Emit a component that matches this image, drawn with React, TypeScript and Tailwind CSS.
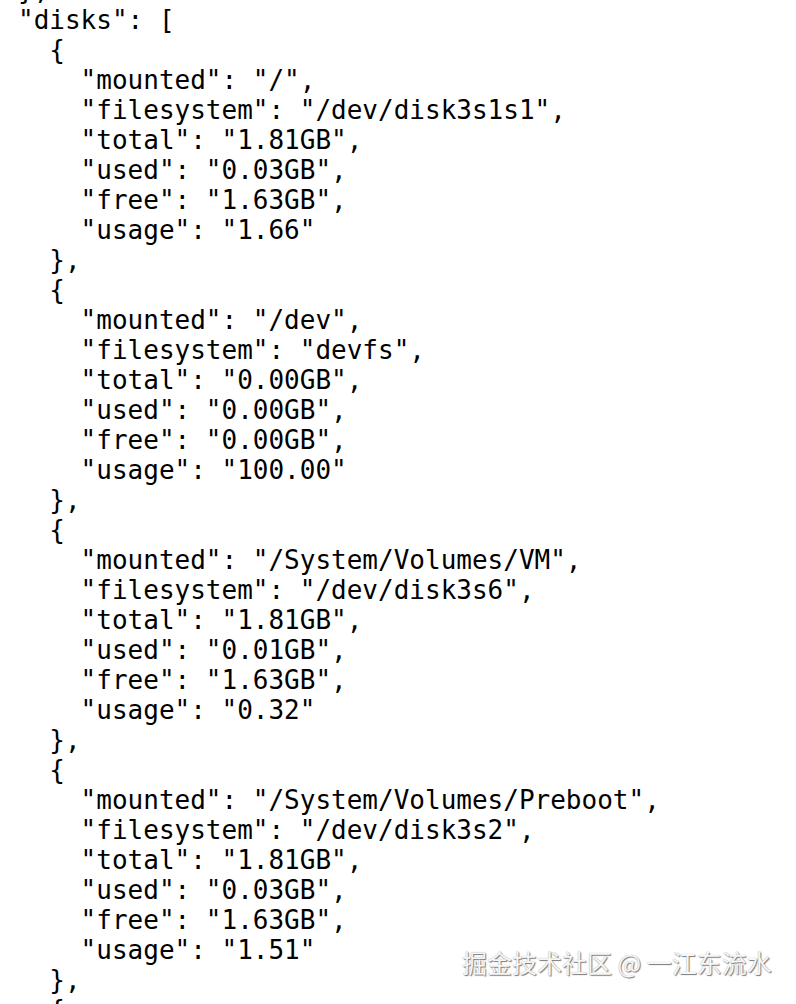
import React from "react";

const disks = [
  { mounted: "/", filesystem: "/dev/disk3s1s1", total: "1.81GB", used: "0.03GB", free: "1.63GB", usage: "1.66" },
  { mounted: "/dev", filesystem: "devfs", total: "0.00GB", used: "0.00GB", free: "0.00GB", usage: "100.00" },
  { mounted: "/System/Volumes/VM", filesystem: "/dev/disk3s6", total: "1.81GB", used: "0.01GB", free: "1.63GB", usage: "0.32" },
  { mounted: "/System/Volumes/Preboot", filesystem: "/dev/disk3s2", total: "1.81GB", used: "0.03GB", free: "1.63GB", usage: "1.51" },
];

function buildLines() {
  const lines: string[] = ["},", '"disks": ['];
  disks.forEach((d) => {
    lines.push("  {");
    const keys = Object.keys(d) as (keyof typeof d)[];
    keys.forEach((k, i) => {
      lines.push(`    "${k}": "${d[k]}"${i < keys.length - 1 ? "," : ""}`);
    });
    lines.push("  },");
  });
  lines.push("  {");
  return lines;
}

export default function App() {
  const lines = buildLines();
  return (
    <div className="relative h-[1004px] w-[796px] overflow-hidden bg-white">
      <pre className="mt-[-25px] pl-[18px] font-['DejaVu_Sans_Mono',monospace] text-[26px] leading-[30px] text-black">
        {lines.join("\n")}
      </pre>

      {/* watermark */}
      <div className="absolute top-[944px] left-[462px] font-['Noto_Sans_CJK_SC',sans-serif] text-[25px] leading-[36px] whitespace-nowrap text-[#f6f6f6] [text-shadow:1px_1px_1px_#7a7a7a,0_0_1px_#a0a0a0]">
        掘金技术社区 @ 一江东流水
      </div>
    </div>
  );
}
